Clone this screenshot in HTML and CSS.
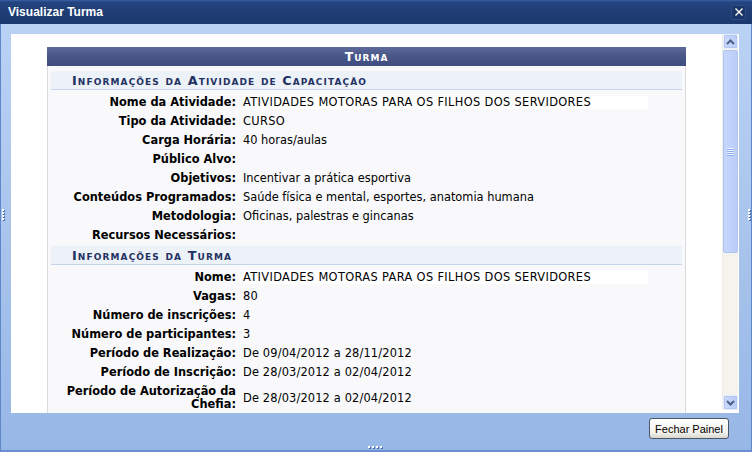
FILE: index.html
```html
<!DOCTYPE html>
<html lang="pt">
<head>
<meta charset="utf-8">
<title>Visualizar Turma</title>
<link rel="stylesheet" href="styles.css">
</head>
<body>
<div class="win">
  <div class="titlebar">
    <span class="title">Visualizar Turma</span>
    <span class="close"><svg width="8" height="8" viewBox="0 0 8 8"><path d="M0.5 0.5 L7.5 7.5 M7.5 0.5 L0.5 7.5" stroke="#fff" stroke-width="1.4"/></svg></span>
  </div>
  <div class="frame">
    <div class="panel">
      <div class="content">
        <div class="box">
          <div class="caption">Turma</div>
          <div class="section first">Informações da Atividade de Capacitação</div>
          <div class="rows">
            <div class="row"><div class="lbl">Nome da Atividade:</div><div class="val"><span class="hl caps">ATIVIDADES MOTORAS PARA OS FILHOS DOS SERVIDORES</span></div></div>
            <div class="row"><div class="lbl">Tipo da Atividade:</div><div class="val caps">CURSO</div></div>
            <div class="row"><div class="lbl">Carga Horária:</div><div class="val">40 horas/aulas</div></div>
            <div class="row"><div class="lbl">Público Alvo:</div><div class="val"></div></div>
            <div class="row"><div class="lbl">Objetivos:</div><div class="val">Incentivar a prática esportiva</div></div>
            <div class="row"><div class="lbl">Conteúdos Programados:</div><div class="val">Saúde física e mental, esportes, anatomia humana</div></div>
            <div class="row"><div class="lbl">Metodologia:</div><div class="val">Oficinas, palestras e gincanas</div></div>
            <div class="row"><div class="lbl">Recursos Necessários:</div><div class="val"></div></div>
          </div>
          <div class="section second">Informações da Turma</div>
          <div class="rows">
            <div class="row"><div class="lbl">Nome:</div><div class="val"><span class="hl caps">ATIVIDADES MOTORAS PARA OS FILHOS DOS SERVIDORES</span></div></div>
            <div class="row"><div class="lbl">Vagas:</div><div class="val num">80</div></div>
            <div class="row"><div class="lbl">Número de inscrições:</div><div class="val num">4</div></div>
            <div class="row"><div class="lbl">Número de participantes:</div><div class="val num">3</div></div>
            <div class="row"><div class="lbl">Período de Realização:</div><div class="val num">De 09/04/2012 a 28/11/2012</div></div>
            <div class="row"><div class="lbl">Período de Inscrição:</div><div class="val num">De 28/03/2012 a 02/04/2012</div></div>
            <div class="row"><div class="lbl">Período de Autorização da Chefia:</div><div class="val num">De 28/03/2012 a 02/04/2012</div></div>
          </div>
        </div>
      </div>
      <div class="scrollbar">
        <div class="sb-btn"><svg width="9" height="6" viewBox="0 0 9 6"><path d="M1 5 L4.5 1.5 L8 5" fill="none" stroke="#4d6185" stroke-width="2"/></svg></div>
        <div class="sb-track">
          <div class="sb-thumb"><div class="grip"><i></i><i></i><i></i><i></i></div></div>
        </div>
        <div class="sb-btn"><svg width="9" height="6" viewBox="0 0 9 6"><path d="M1 1 L4.5 4.5 L8 1" fill="none" stroke="#4d6185" stroke-width="2"/></svg></div>
      </div>
    </div>
    <div class="footer"><button class="btn">Fechar Painel</button></div>
  </div>
  <div class="grip-v left"><i></i><i></i><i></i><i></i></div>
  <div class="grip-v right"><i></i><i></i><i></i><i></i></div>
  <div class="grip-h"><i></i><i></i><i></i><i></i></div>
</div>
</body>
</html>
```
FILE: styles.css
```css
* { box-sizing: border-box; }
html, body { margin: 0; padding: 0; }
body { width: 752px; height: 452px; overflow: hidden; background: #fff; }

.win {
  position: relative;
  width: 752px;
  height: 452px;
  display: flex;
  flex-direction: column;
  border-left: 1px solid #5f86c8;
  border-right: 1px solid #5f86c8;
  border-bottom: 2px solid #6a8fd0;
  background: linear-gradient(#bcd3f5, #97b7e6);
}

.titlebar {
  height: 24px;
  flex: none;
  display: flex;
  align-items: center;
  justify-content: space-between;
  padding: 0 6px 0 8px;
  background: linear-gradient(#3a62a8 0, #23447f 2px, #1f3d75 50%, #1b386c 100%);
  margin: 0 -1px;
}
.title {
  font-family: "Liberation Sans", Arial, sans-serif;
  font-weight: bold;
  font-size: 12px;
  color: #fff;
}
.close {
  width: 15px;
  height: 15px;
  display: flex;
  align-items: center;
  justify-content: center;
  background: #1a3566;
  border: 1px solid #2d4d88;
  border-radius: 2px;
}

.frame {
  flex: 1;
  display: flex;
  flex-direction: column;
  padding: 10px 12px 0 10px;
}

.panel {
  height: 379px;
  flex: none;
  background: #fff;
  display: flex;
  overflow: hidden;
}

.content {
  flex: 1;
  padding: 13px 0 0 36px;
  overflow: hidden;
}

.box {
  width: 639px;
  height: 400px;
  border: 1px solid #dadada;
  border-top: none;
  background: #f9f9fb;
  font-family: "DejaVu Sans", Verdana, sans-serif;
  font-size: 11.4px;
  color: #000;
}

.caption {
  height: 19px;
  margin: 0 -1px;
  background: linear-gradient(#5c6a9a, #4a5789 45%, #3f4c80);
  color: #fff;
  font-weight: bold;
  font-variant: small-caps;
  font-size: 12.5px;
  letter-spacing: 1px;
  text-align: center;
  line-height: 19px;
}

.section {
  margin: 0 3px;
  height: 19px;
  background: #edf1f8;
  border-bottom: 1px solid #c6d3ea;
  color: #1f3262;
  font-weight: bold;
  font-variant: small-caps;
  font-size: 12.8px;
  letter-spacing: 1.1px;
  line-height: 16px;
  padding: 2px 0 0 21px;
}
.section.first { margin-top: 5px; }
.section.second { margin-top: 4px; }

.row {
  display: grid;
  grid-template-columns: 188px 1fr;
  align-items: center;
}
.lbl {
  text-align: right;
  font-weight: bold;
  line-height: 13px;
  padding: 6px 0 0;
}
.val {
  line-height: 13px;
  padding: 6px 0 0 7px;
  min-height: 19px;
}
.caps { letter-spacing: 0.35px; }
.num { letter-spacing: 0.15px; }
.hl {
  display: inline-block;
  background: #fff;
  width: 405px;
}

.scrollbar {
  width: 16px;
  flex: none;
  margin: 0 1px 3px 0;
  display: flex;
  flex-direction: column;
  background: #f4f3ee;
  border-left: 1px solid #eeede7;
}
.sb-btn {
  height: 15px;
  flex: none;
  display: flex;
  align-items: center;
  justify-content: center;
  background: linear-gradient(90deg, #cbd8fb, #b9ccf7);
  border: 1px solid #e8eefc;
  border-radius: 2px;
  box-shadow: inset 0 0 0 1px #b3c6f2;
}
.sb-track {
  flex: 1;
  display: flex;
  flex-direction: column;
}
.sb-thumb {
  height: 203px;
  margin-top: 1px;
  background: linear-gradient(90deg, #c8d6fc, #bacdf8);
  border: 1px solid #aec3f0;
  border-radius: 2px;
  display: flex;
  align-items: center;
  justify-content: center;
}
.grip {
  display: flex;
  flex-direction: column;
  gap: 1px;
}
.grip i {
  display: block;
  width: 7px;
  height: 1px;
  background: #eef3fe;
  box-shadow: 0 1px 0 #8eacec;
}

.footer {
  flex: 1;
  display: flex;
  justify-content: flex-end;
  align-items: flex-start;
  padding: 5px 10px 0 0;
}
.btn {
  width: 80px;
  height: 21px;
  font-family: "Liberation Sans", Arial, sans-serif;
  font-size: 11px;
  color: #000;
  background: linear-gradient(#ffffff, #f3f2ee 70%, #d9d7cd);
  border: 1px solid #4b5766;
  border-radius: 3px;
  padding: 0;
}

.grip-v {
  position: absolute;
  top: 209px;
  display: flex;
  flex-direction: column;
  gap: 1px;
}
.grip-v.left { left: 1px; }
.grip-v.right { right: 1px; }
.grip-v i, .grip-h i {
  display: block;
  width: 2px;
  height: 2px;
  background: #fff;
  box-shadow: 1px 1px 0 #4f73b5;
}
.grip-h {
  position: absolute;
  bottom: 2px;
  left: 367px;
  display: flex;
  gap: 2px;
}
```
